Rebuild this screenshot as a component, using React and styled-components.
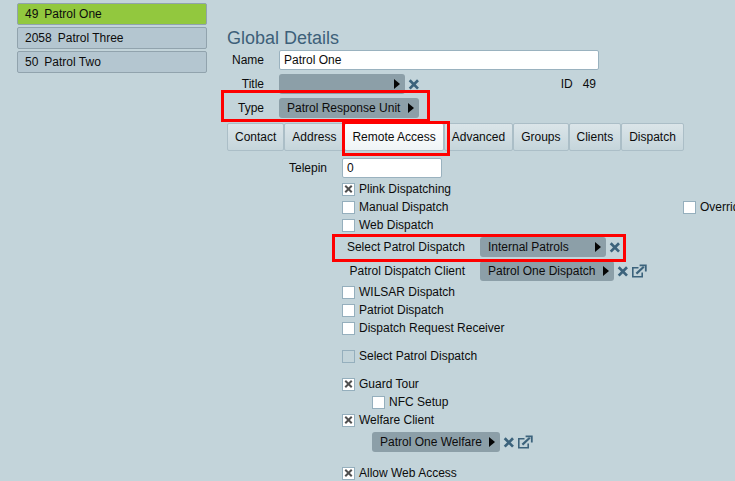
import React, { useState } from "react";
import styled, { createGlobalStyle, css } from "styled-components";

const GlobalStyle = createGlobalStyle`
  * {
    box-sizing: border-box;
  }
  body {
    margin: 0;
    background: #c3d4da;
    overflow: hidden;
  }
  body, button, input, select {
    font-family: "Liberation Sans", Arial, sans-serif;
    font-size: 12px;
    color: #0c0c0c;
  }
`;

const Page = styled.div`
  display: flex;
  gap: 20px;
  padding-left: 17px;
  line-height: 18px;
  white-space: nowrap;
`;

const Sidebar = styled.nav`
  display: flex;
  flex-direction: column;
  flex: none;
  gap: 2px;
  width: 190px;
  padding-top: 3px;
`;

const ClientItem = styled.button`
  display: flex;
  align-items: center;
  gap: 6px;
  height: 22px;
  padding: 0 7px;
  border: 1px solid #91a3ad;
  border-radius: 2px;
  background: ${(props) => (props.$active ? "#92c83e" : "#b4c6d0")};
  cursor: pointer;
`;

const Main = styled.main`
  flex: 1;
  min-width: 0;
  padding-top: 26px;
`;

const Heading = styled.h1`
  margin: 0;
  font-size: 18px;
  font-weight: normal;
  line-height: 24px;
  color: #3d6079;
`;

const Form = styled.div`
  display: flex;
  flex-direction: column;
  gap: 4px;
  max-width: 372px;
`;

const Field = styled.div`
  position: relative;
  display: grid;
  grid-template-columns: ${(props) => props.$label || 37}px 1fr;
  align-items: center;
  column-gap: 15px;
  height: 20px;
`;

const FieldLabel = styled.label`
  text-align: right;
`;

const Controls = styled.div`
  display: flex;
  align-items: center;
  gap: 3px;
`;

const TextInput = styled.input`
  width: ${(props) => props.$width || "100%"};
  height: 20px;
  padding: 0 4px;
  border: 1px solid #9ab2bf;
  border-radius: 2px;
  background: #fff;
`;

const RecordId = styled.dl`
  display: flex;
  gap: 10px;
  margin: 0 3px 0 auto;

  dd {
    margin: 0;
  }
`;

const DropdownBox = styled.span`
  display: inline-grid;
  flex: none;
  align-items: center;

  select,
  svg {
    grid-area: 1 / 1;
  }
  svg {
    justify-self: end;
    margin-right: 5px;
    pointer-events: none;
  }
`;

const Select = styled.select`
  appearance: none;
  min-width: 126px;
  height: 20px;
  padding: 0 18px 0 8px;
  border: none;
  border-radius: 3px;
  background: #8c9fa8;
`;

const IconButton = styled.button`
  display: flex;
  flex: none;
  padding: 0;
  border: none;
  background: none;
  color: #3c637c;
  cursor: pointer;
`;

const Tabs = styled.div`
  display: flex;
  margin: 5px 0 7px;
`;

const TabSlot = styled.div`
  position: relative;
`;

const Tab = styled.button`
  height: 28px;
  padding: 0 7px;
  border: 1px solid #abbec7;
  border-radius: 2px;
  background: linear-gradient(#dbe5e9, #c5d5db);
  cursor: pointer;

  ${(props) =>
    props.$active &&
    css`
      background: linear-gradient(#ffffff, #eff4f6);
    `}
`;

// red marker drawn over the part it sits in
const Highlight = styled.span`
  position: absolute;
  inset: ${(props) => props.$inset};
  z-index: 1;
  border: 3px solid #fe0000;
  pointer-events: none;
`;

const Panel = styled.div`
  padding-left: 115px;
`;

const Checks = styled.div`
  display: flex;
  flex-direction: column;
  margin-top: ${(props) => props.$top}px;
`;

const CheckRow = styled.div`
  display: grid;
  grid-template-columns: 341px auto;
  padding-left: ${(props) => (props.$nested ? 30 : 0)}px;
`;

const CheckLabel = styled.label`
  display: flex;
  align-items: center;
  gap: 4px;
  height: 18px;
`;

const Checkbox = styled.input`
  appearance: none;
  display: grid;
  place-items: center;
  flex: none;
  width: 13px;
  height: 13px;
  margin: 0;
  border: 1px solid #95afbd;
  background: #fff;

  &:disabled {
    background: transparent;
  }
  &:checked::before {
    content: "";
    width: 9px;
    height: 9px;
    background: #505050;
    clip-path: polygon(6% 22%, 22% 6%, 50% 34%, 78% 6%, 94% 22%, 66% 50%, 94% 78%, 78% 94%, 50% 66%, 22% 94%, 6% 78%, 34% 50%);
  }
`;

const PatrolFields = styled.div`
  display: flex;
  flex-direction: column;
  gap: 4px;
  width: 284px;
  margin: 3px 0 2px;
`;

const WelfareControls = styled(Controls)`
  padding: 3px 0 0 30px;
`;

const Clear = ({ label }) => (
  <IconButton aria-label={label}>
    <svg width="11" height="11" viewBox="0 0 11 11">
      <path d="M1.7 1.3 10 9.6M10 1.3 1.7 9.6" stroke="currentColor" strokeWidth="2.7" />
    </svg>
  </IconButton>
);

const OpenLink = ({ label }) => (
  <IconButton aria-label={label}>
    <svg width="16" height="14" viewBox="0 0 16 14" fill="none" stroke="currentColor">
      <path d="M7.5 3.7H1.8V12.8H11.2V8.5" strokeWidth="1.6" />
      <path d="M5.4 9.6 12.8 2.8" strokeWidth="2.2" />
      <path d="M8.6 1.4H14.8V7.4" strokeWidth="1.8" />
    </svg>
  </IconButton>
);

const Dropdown = ({ id, value, label }) => (
  <DropdownBox>
    <Select id={id} aria-label={label} defaultValue={value}>
      <option value={value}>{value}</option>
    </Select>
    <svg width="6" height="10" viewBox="0 0 6 10">
      <path d="M0 0 6 5 0 10Z" fill="#050505" />
    </svg>
  </DropdownBox>
);

const Check = ({ label, checked, disabled }) => (
  <CheckLabel>
    <Checkbox type="checkbox" defaultChecked={checked} disabled={disabled} />
    {label}
  </CheckLabel>
);

const clients = [
  { id: 49, name: "Patrol One" },
  { id: 2058, name: "Patrol Three" },
  { id: 50, name: "Patrol Two" },
];

const tabs = ["Contact", "Address", "Remote Access", "Advanced", "Groups", "Clients", "Dispatch"];

const App = () => {
  const [client, setClient] = useState(49);
  const [tab, setTab] = useState("Remote Access");

  return (
    <>
      <GlobalStyle />
      <Page>
        <Sidebar>
          {clients.map((item) => (
            <ClientItem key={item.id} $active={item.id === client} onClick={() => setClient(item.id)}>
              <span>{item.id}</span>
              <span>{item.name}</span>
            </ClientItem>
          ))}
        </Sidebar>
        <Main>
          <Heading>Global Details</Heading>
          <Form>
            <Field>
              <FieldLabel htmlFor="name">Name</FieldLabel>
              <TextInput id="name" defaultValue="Patrol One" />
            </Field>
            <Field>
              <FieldLabel htmlFor="title">Title</FieldLabel>
              <Controls>
                <Dropdown id="title" value="" />
                <Clear label="Clear title" />
                <RecordId>
                  <dt>ID</dt>
                  <dd>49</dd>
                </RecordId>
              </Controls>
            </Field>
            <Field>
              <FieldLabel htmlFor="type">Type</FieldLabel>
              <Controls>
                <Dropdown id="type" value="Patrol Response Unit" />
              </Controls>
              <Highlight $inset="-8px 169px -4px -6px" />
            </Field>
          </Form>
          <Tabs role="tablist">
            {tabs.map((name) => (
              <TabSlot key={name}>
                <Tab role="tab" aria-selected={name === tab} $active={name === tab} onClick={() => setTab(name)}>
                  {name}
                </Tab>
                {name === "Remote Access" && <Highlight $inset="-2px -6px -5px -2px" />}
              </TabSlot>
            ))}
          </Tabs>
          <Field $label={100}>
            <FieldLabel htmlFor="telepin">Telepin</FieldLabel>
            <TextInput id="telepin" $width="100px" defaultValue="0" />
          </Field>
          <Panel>
            <Checks $top={2}>
              <CheckRow>
                <Check label="Plink Dispatching" checked />
              </CheckRow>
              <CheckRow>
                <Check label="Manual Dispatch" />
                <Check label="Override" />
              </CheckRow>
              <CheckRow>
                <Check label="Web Dispatch" />
              </CheckRow>
            </Checks>
            <PatrolFields>
              <Field $label={123}>
                <FieldLabel htmlFor="patrol-dispatch">Select Patrol Dispatch</FieldLabel>
                <Controls>
                  <Dropdown id="patrol-dispatch" value="Internal Patrols" />
                  <Clear label="Clear patrol dispatch" />
                </Controls>
                <Highlight $inset="-3px 0 -5px -10px" />
              </Field>
              <Field $label={123}>
                <FieldLabel htmlFor="dispatch-client">Patrol Dispatch Client</FieldLabel>
                <Controls>
                  <Dropdown id="dispatch-client" value="Patrol One Dispatch" />
                  <Clear label="Clear dispatch client" />
                  <OpenLink label="Open dispatch client" />
                </Controls>
              </Field>
            </PatrolFields>
            <Checks $top={2}>
              <Check label="WILSAR Dispatch" />
              <Check label="Patriot Dispatch" />
              <Check label="Dispatch Request Receiver" />
            </Checks>
            <Checks $top={10}>
              <Check label="Select Patrol Dispatch" disabled />
            </Checks>
            <Checks $top={10}>
              <Check label="Guard Tour" checked />
              <CheckRow $nested>
                <Check label="NFC Setup" />
              </CheckRow>
              <Check label="Welfare Client" checked />
            </Checks>
            <WelfareControls>
              <Dropdown label="Welfare client" value="Patrol One Welfare" />
              <Clear label="Clear welfare client" />
              <OpenLink label="Open welfare client" />
            </WelfareControls>
            <Checks $top={12}>
              <Check label="Allow Web Access" checked />
            </Checks>
          </Panel>
        </Main>
      </Page>
    </>
  );
};

export default App;
